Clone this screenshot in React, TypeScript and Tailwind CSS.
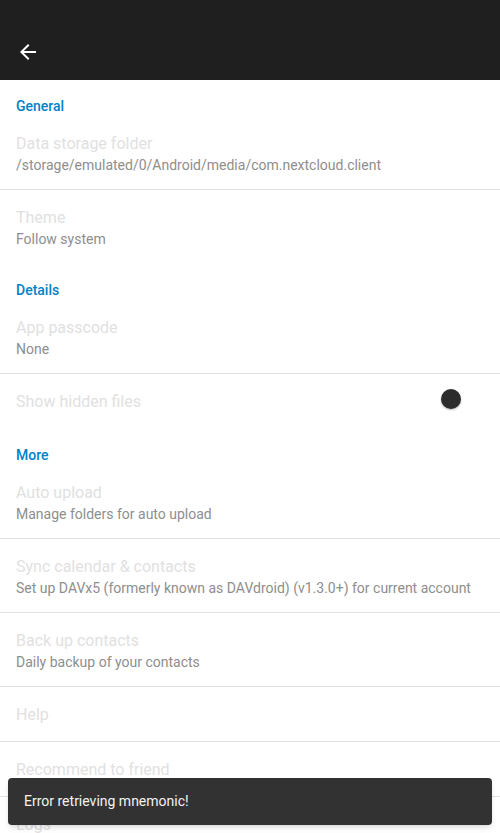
type Pref = {
  title: string;
  summary?: string;
  toggle?: boolean;
  divider?: boolean;
};

type Section = {
  name: string;
  items: Pref[];
};

const sections: Section[] = [
  {
    name: 'General',
    items: [
      {
        title: 'Data storage folder',
        summary: '/storage/emulated/0/Android/media/com.nextcloud.client',
        divider: true,
      },
      { title: 'Theme', summary: 'Follow system' },
    ],
  },
  {
    name: 'Details',
    items: [
      { title: 'App passcode', summary: 'None', divider: true },
      { title: 'Show hidden files', toggle: true },
    ],
  },
  {
    name: 'More',
    items: [
      { title: 'Auto upload', summary: 'Manage folders for auto upload', divider: true },
      {
        title: 'Sync calendar & contacts',
        summary: 'Set up DAVx5 (formerly known as DAVdroid) (v1.3.0+) for current account',
        divider: true,
      },
      { title: 'Back up contacts', summary: 'Daily backup of your contacts', divider: true },
      { title: 'Help', divider: true },
      { title: 'Recommend to friend', divider: true },
      { title: 'Logs' },
    ],
  },
];

const PrefRow = ({ pref }: { pref: Pref }) => (
  <>
    <div
      className={`flex items-start pl-4 pt-[17px] ${pref.summary ? 'pb-[14px]' : 'pb-[15px]'} pr-[39px]`}
    >
      <div className="flex-1 min-w-0">
        <div className="text-[16px] leading-[22px] text-[#e1e1e1]">{pref.title}</div>
        {pref.summary && (
          <div className="text-[14px] leading-[20px] text-[#8e8e8e] whitespace-nowrap">
            {pref.summary}
          </div>
        )}
      </div>
      {pref.toggle && (
        <div className="w-5 h-5 mt-[-2px] rounded-full bg-[#2c2c2c] shadow-[0_1px_2px_rgba(0,0,0,0.3)]" />
      )}
    </div>
    {pref.divider && <div className="h-px bg-[#e2e2e2]" />}
  </>
);

export default function App() {
  return (
    <div
      className="relative w-[500px] h-[833px] overflow-hidden bg-white"
      style={{ fontFamily: 'Roboto, "Noto Sans", sans-serif' }}
    >
      {/* toolbar */}
      <div className="h-20 bg-[#1f1f1f] flex items-start">
        <svg className="w-6 h-6 ml-4 mt-10 text-white" viewBox="0 0 24 24" fill="currentColor">
          <path d="M20 11H7.83l5.59-5.59L12 4l-8 8 8 8 1.41-1.41L7.83 13H20v-2z" />
        </svg>
      </div>

      {sections.map((section, i) => (
        <div key={section.name}>
          <div
            className={`pl-4 ${i === 0 ? 'pt-4' : 'pt-[17px]'} pb-0 text-[14px] leading-[20px] font-medium text-[#0082c9]`}
          >
            {section.name}
          </div>
          {section.items.map((pref) => (
            <PrefRow key={pref.title} pref={pref} />
          ))}
        </div>
      ))}

      {/* snackbar */}
      <div className="absolute left-2 right-2 top-[778px] h-[47px] rounded bg-[#323232] flex items-center pl-4 shadow-md">
        <span className="text-[14px] text-[#f2f2f2]">Error retrieving mnemonic!</span>
      </div>
    </div>
  );
}
